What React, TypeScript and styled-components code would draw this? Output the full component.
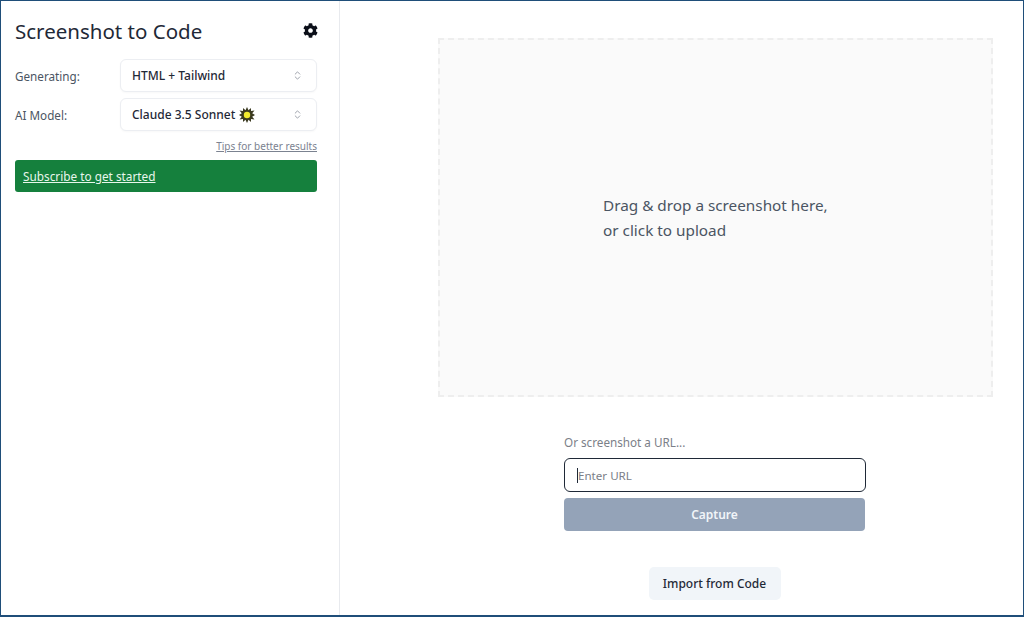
import React from "react";
import styled, { createGlobalStyle } from "styled-components";
import { FaCog } from "react-icons/fa";
import { ChevronsUpDown } from "lucide-react";

const GlobalStyle = createGlobalStyle`
  html, body {
    margin: 0;
    padding: 0;
    background: #fff;
  }
  * {
    box-sizing: border-box;
  }
  body {
    font-family: "Noto Sans", "Open Sans", sans-serif;
    color: #111827;
  }
`;

const Frame = styled.div`
  width: 1024px;
  height: 617px;
  display: flex;
  overflow: hidden;
  border: 1px solid #1f4e79;
  border-bottom-width: 2px;
`;

const Sidebar = styled.aside`
  width: 339px;
  flex-shrink: 0;
  padding: 14px 22px 0 14px;
  border-right: 1px solid #e8eaee;
  display: flex;
  flex-direction: column;
`;

const Header = styled.div`
  height: 32px;
  display: flex;
  align-items: center;
  justify-content: space-between;
  margin-bottom: 12px;
`;

const Title = styled.h1`
  margin: 0;
  font-size: 20.5px;
  font-weight: 400;
  line-height: 32px;
  color: #1f2937;
`;

const SettingsButton = styled.span`
  display: flex;
  margin-right: -1px;
  color: #0b0f19;
  font-size: 15px;
  position: relative;
  top: -1px;
`;

const Row = styled.div`
  height: 33px;
  display: flex;
  align-items: center;
  margin-bottom: 6px;
`;

const RowLabel = styled.span`
  width: 105px;
  flex-shrink: 0;
  font-size: 11.7px;
  color: #4b5563;
`;

const Select = styled.div`
  flex: 1;
  height: 33px;
  display: flex;
  align-items: center;
  justify-content: space-between;
  padding: 0 13px 0 11px;
  border: 1px solid #eceef2;
  border-radius: 6px;
  background: #fff;
  font-size: 12px;
  font-weight: 500;
  color: #1f2937;
  box-shadow: 0 1px 2px rgba(0, 0, 0, 0.03);
`;

const SelectValue = styled.span`
  display: flex;
  align-items: center;
  gap: 4px;
`;

const SelectIcon = styled(ChevronsUpDown)`
  color: #6b7280;
  opacity: 0.7;
`;

const TipsRow = styled.div`
  display: flex;
  justify-content: flex-end;
  margin-top: 2px;
  margin-bottom: 7px;
`;

const TipsLink = styled.a`
  font-size: 10px;
  line-height: 14px;
  color: #7b8290;
  text-decoration: underline;
`;

const SubscribeBar = styled.div`
  height: 32px;
  display: flex;
  align-items: center;
  padding-left: 8px;
  background: #15803d;
  border-radius: 3px;
  font-size: 11.8px;
  color: #e8f6ec;
  text-decoration: underline;
`;

const Main = styled.main`
  flex: 1;
  display: flex;
  flex-direction: column;
  align-items: center;
  padding: 37px 0 0 36px;
`;

const DropZone = styled.div`
  width: 555px;
  height: 359px;
  margin-left: 32px;
  display: flex;
  align-items: center;
  justify-content: center;
  background: #fafafa;
  border: 2px dashed #eeeeee;
  font-size: 15.3px;
  line-height: 25px;
  color: #4b5563;
`;

const DropText = styled.p`
  margin: 0 0 0 15px;
  width: 240px;
`;

const UrlSection = styled.div`
  width: 302px;
  margin-top: 37px;
  margin-left: 31px;
  display: flex;
  flex-direction: column;
`;

const UrlLabel = styled.label`
  font-size: 11.7px;
  line-height: 16px;
  color: #7b8088;
  margin-bottom: 8px;
`;

const UrlInput = styled.div`
  height: 34px;
  display: flex;
  align-items: center;
  padding-left: 12px;
  border: 1px solid #1f2937;
  border-radius: 6px;
  font-size: 11.6px;
  color: #7b8088;
  margin-bottom: 6px;
`;

const Caret = styled.span`
  width: 1px;
  height: 15px;
  background: #1f2937;
`;

const CaptureButton = styled.button`
  width: 301px;
  height: 33px;
  border: none;
  border-radius: 4px;
  background: #94a3b8;
  color: #f1f5f9;
  font-family: inherit;
  font-size: 12px;
  font-weight: 600;
  padding: 0;
`;

const ImportButton = styled.button`
  height: 33px;
  width: 132px;
  margin-top: 36px;
  margin-left: 30px;
  border: none;
  border-radius: 5px;
  background: #f1f5f9;
  color: #1f2937;
  font-family: inherit;
  font-size: 12px;
  font-weight: 500;
  padding: 0;
`;

const StarIcon = () => (
  <svg width="16" height="16" viewBox="0 0 16 16">
    <path
      d="M8 0 9.5 3.2 12 1 12 4 15.5 3.5 13.2 6.3 16 8 13.2 9.7 15.5 12.5 12 12 12 15 9.5 12.8 8 16 6.5 12.8 4 15 4 12 0.5 12.5 2.8 9.7 0 8 2.8 6.3 0.5 3.5 4 4 4 1 6.5 3.2Z"
      fill="#3b3a20"
    />
    <circle cx="8" cy="8" r="3.2" fill="#f2ea2e" />
  </svg>
);

const App = () => {
  return (
    <>
      <GlobalStyle />
      <Frame>
        <Sidebar>
          <Header>
            <Title>Screenshot to Code</Title>
            <SettingsButton>
              <FaCog />
            </SettingsButton>
          </Header>
          <Row>
            <RowLabel>Generating:</RowLabel>
            <Select>
              <SelectValue>HTML + Tailwind</SelectValue>
              <SelectIcon size={11} />
            </Select>
          </Row>
          <Row>
            <RowLabel>AI Model:</RowLabel>
            <Select>
              <SelectValue>
                Claude 3.5 Sonnet <StarIcon />
              </SelectValue>
              <SelectIcon size={11} />
            </Select>
          </Row>
          <TipsRow>
            <TipsLink>Tips for better results</TipsLink>
          </TipsRow>
          <SubscribeBar>Subscribe to get started</SubscribeBar>
        </Sidebar>
        <Main>
          <DropZone>
            <DropText>
              Drag &amp; drop a screenshot here,
              <br />
              or click to upload
            </DropText>
          </DropZone>
          <UrlSection>
            <UrlLabel>Or screenshot a URL...</UrlLabel>
            <UrlInput>
              <Caret />
              Enter URL
            </UrlInput>
            <CaptureButton>Capture</CaptureButton>
          </UrlSection>
          <ImportButton>Import from Code</ImportButton>
        </Main>
      </Frame>
    </>
  );
};

export default App;
